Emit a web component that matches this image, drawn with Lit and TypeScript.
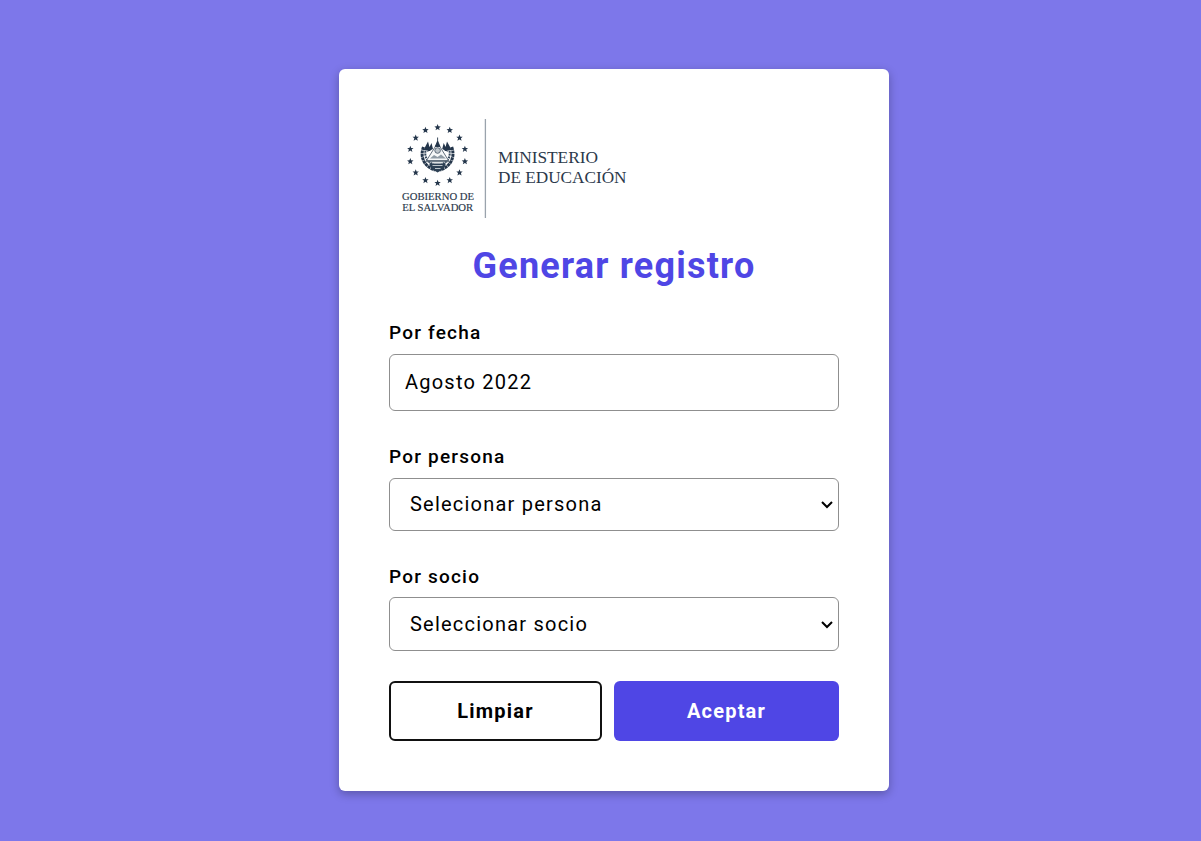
import { LitElement, html, svg, css } from "lit";
import { customElement } from "lit/decorators.js";

const STAR = "M0-3.3 .9-1.1 3.2-1 1.4.5 2.1 2.9 0 1.6-2.1 2.9-1.4.5-3.2-1-.9-1.1Z";

@customElement("ministry-logo")
export class MinistryLogo extends LitElement {
  static styles = css`
    :host { display: block; height: 99px; letter-spacing: 0; }
    svg { display: block; }
    text { font-family: "Liberation Serif", serif; fill: #2b394b; }
    .small { font-size: 10px; stroke: #2b394b; stroke-width: 0.15; }
    .large { font-size: 16px; }
  `;

  render() {
    const stars = Array.from({ length: 14 }, (_, i) => {
      const a = (i * Math.PI) / 7;
      return svg`<path d=${STAR} fill="#24364b" transform="translate(${48.6 + 28 * Math.sin(a)} ${36.2 - 27.8 * Math.cos(a)})"/>`;
    });
    return html`
      <svg width="250" height="99" viewBox="0 0 250 99" role="img" aria-label="Ministerio de Educación">
        ${stars}
        <g fill="none" stroke="#24364b" stroke-width="3" stroke-dasharray="3 .5">
          <path d="M34.5 28C31 37 34 47 46 51"/>
          <path d="M62.7 28C66 37 63 47 51 51"/>
        </g>
        <g fill="none" stroke="#33465a" stroke-width="2" stroke-dasharray="2 .8">
          <path d="M37 29C35 37 37 42 45 46"/>
          <path d="M60 29C62 37 60 42 52 46"/>
        </g>
        <path d="M34.5 31 39 22.5 41.5 32ZM62.7 31 58 22.5 55.5 32ZM38 33 42.5 24 44 30ZM59 33 54.7 24 53.2 30Z" fill="#24364b"/>
        <path d="M48.6 24 37.5 41.5H59.5Z" fill="#f5f7f8" stroke="#51606f" stroke-width=".9"/>
        <path d="M48.6 18.5V28M46.3 27.5 48.6 22 51 27.5Z" fill="#24364b" stroke="#24364b" stroke-width=".9"/>
        <circle cx="48.6" cy="31.5" r="2.8" fill="#bdc5cb" stroke="#51606f" stroke-width=".9"/>
        <path d="M41 39.5 45 36 48.6 38 52 35.5 57 39.5Z" fill="#8f9ba5"/>
        <path d="M37 42.7H60" stroke="#51606f" stroke-width="1"/>
        <path d="M40 44.5H57L54.5 50 48.6 53.5 42.5 50Z" fill="#2d4054"/>
        <path d="M43.5 46.5H53.5M46 49.5H51.5" stroke="#dfe4e7" stroke-width=".8"/>
        <text class="small" x="13" y="80.7" textLength="72" lengthAdjust="spacingAndGlyphs">GOBIERNO DE</text>
        <text class="small" x="13.2" y="91.8" textLength="71" lengthAdjust="spacingAndGlyphs">EL SALVADOR</text>
        <path d="M96.4 0V99" stroke="#9aa3ac" stroke-width="1.3"/>
        <text class="large" x="109" y="44.3" textLength="100" lengthAdjust="spacingAndGlyphs">MINISTERIO</text>
        <text class="large" x="109" y="64" textLength="128.5" lengthAdjust="spacingAndGlyphs">DE EDUCACIÓN</text>
      </svg>
    `;
  }
}

@customElement("app-root")
export class AppRoot extends LitElement {
  static styles = css`
    :host {
      display: flex;
      justify-content: center;
      box-sizing: border-box;
      height: 841px;
      padding: 69px 0 0 27px;
      background: #7d77ea;
      color: #000;
      font-family: Roboto, sans-serif;
      letter-spacing: 1.2px;
      overflow: hidden;
    }
    * { box-sizing: border-box; }
    .card {
      width: 550px;
      height: 722px;
      padding: 50px;
      background: #fff;
      border-radius: 6px;
      box-shadow: 0 3px 10px rgba(0, 0, 0, 0.28);
    }
    .title {
      margin: 24px 0 0;
      font-size: 36px;
      line-height: 48px;
      font-weight: 700;
      text-align: center;
      color: #4f46e5;
    }
    .field { display: flex; flex-direction: column; }
    .date { margin-top: 31px; }
    .person { margin-top: 34px; }
    .partner { margin-top: 34px; }
    .label { font-size: 19px; line-height: 24px; font-weight: 500; margin-bottom: 9px; }
    .control {
      display: block;
      width: 100%;
      border: 1px solid #8f8f8f;
      border-radius: 6px;
      background: #fff;
      color: #000;
      font: 400 20px Roboto, sans-serif;
      letter-spacing: 1.22px;
      outline: none;
      appearance: none;
    }
    .input { height: 57px; padding: 0 15px 2px; }
    .picker { position: relative; }
    .select { height: 53px; padding: 0 20px 1px; }
    .chevron { position: absolute; right: 6px; top: 22px; pointer-events: none; }
    .partner .label { margin-bottom: 8px; }
    .partner .select { height: 54px; }
    .partner .chevron { top: 23px; }
    .actions {
      display: grid;
      grid-template-columns: 213px 225px;
      gap: 12px;
      margin-top: 30px;
    }
    .button {
      height: 60px;
      padding: 0;
      border-radius: 6px;
      font: 700 20px Roboto, sans-serif;
      letter-spacing: 1.2px;
    }
    .clear { border: 2px solid #111; background: #fff; color: #000; }
    .accept { border: 0; background: #4f46e5; color: #fff; }
  `;

  private picker(id: string, text: string) {
    return html`
      <div class="picker">
        <select class="control select" id=${id}><option>${text}</option></select>
        <svg class="chevron" width="12" height="10" viewBox="0 0 12 10" fill="none" stroke="#000" stroke-width="2">
          <path d="M1 2 6 7 11 2"/>
        </svg>
      </div>
    `;
  }

  render() {
    return html`
      <main class="card">
        <ministry-logo></ministry-logo>
        <h1 class="title">Generar registro</h1>
        <div class="field date">
          <label class="label" for="fecha">Por fecha</label>
          <input class="control input" id="fecha" type="text" value="Agosto 2022" />
        </div>
        <div class="field person">
          <label class="label" for="persona">Por persona</label>
          ${this.picker("persona", "Selecionar persona")}
        </div>
        <div class="field partner">
          <label class="label" for="socio">Por socio</label>
          ${this.picker("socio", "Seleccionar socio")}
        </div>
        <div class="actions">
          <button class="button clear" type="button">Limpiar</button>
          <button class="button accept" type="button">Aceptar</button>
        </div>
      </main>
    `;
  }
}
